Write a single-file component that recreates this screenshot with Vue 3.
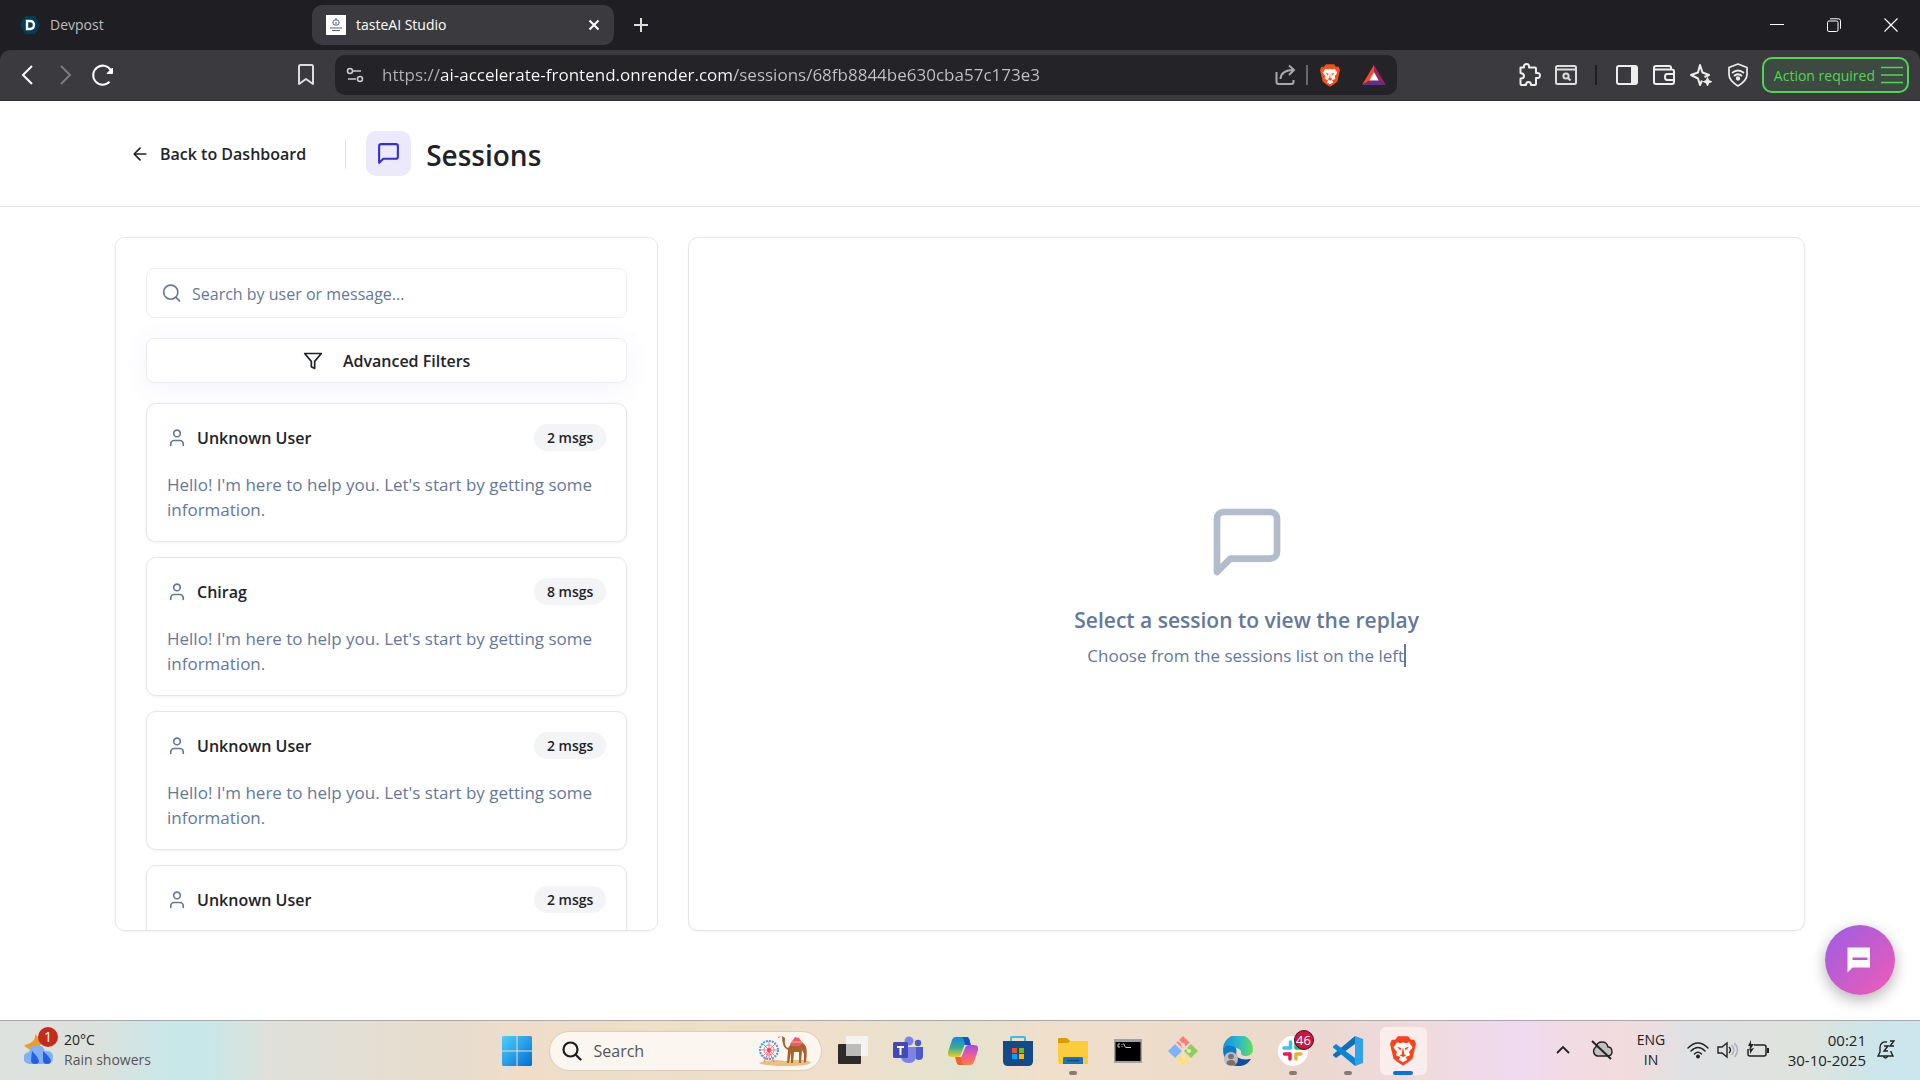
<script setup>
import { ref } from 'vue'

const address = ref('https://ai-accelerate-frontend.onrender.com/sessions/68fb8844be630cba57c173e3')
const query = ref('')
const taskbarQuery = ref('')
const greeting = "Hello! I'm here to help you. Let's start by getting some information."
const sessions = [
  { id: 1, user: 'Unknown User', count: 2, preview: greeting },
  { id: 2, user: 'Chirag', count: 8, preview: greeting },
  { id: 3, user: 'Unknown User', count: 2, preview: greeting },
  { id: 4, user: 'Unknown User', count: 2, preview: greeting }
]
</script>

<template>
  <div class="screen">
    <header class="tabs">
      <div class="tab">
        <svg width="20" height="20" viewBox="0 0 20 20"><path d="M5 1h10l5 9-5 9H5L0 10z" fill="#003e54" /><path d="M7 6h3c2.700 0 4 1.500 4 4s-1.300 4-4 4H7z" fill="none" stroke="#fff" stroke-width="2.400" /></svg>
        <span class="tab-title">Devpost</span>
      </div>
      <div class="tab active">
        <svg width="20" height="20" viewBox="0 0 20 20"><path d="M0 0h20v20H0z" fill="#fff" /><g fill="none" stroke="#53607e"><rect x="7" y="5" width="6" height="5" rx="2" /><path d="M10 3v2M9 8h2M4 13h12M6 15.500h8" /></g></svg>
        <span class="tab-title">tasteAI Studio</span>
        <button class="bare close" aria-label="Close tab"><svg width="12" height="12" viewBox="0 0 12 12"><path d="M1.500 1.500l9 9M10.500 1.500l-9 9" stroke="#fff" stroke-width="2" /></svg></button>
      </div>
      <button class="bare new-tab" aria-label="New tab"><svg width="14" height="14" viewBox="0 0 14 14"><path d="M7 0v14M0 7h14" stroke="#ddd" stroke-width="2" /></svg></button>
      <div class="window-buttons">
        <button class="bare" aria-label="Minimize"><svg width="14" height="14" viewBox="0 0 14 14"><path d="M0 6.500h14" stroke="#fff" /></svg></button>
        <button class="bare" aria-label="Restore"><svg width="14" height="14" viewBox="0 0 14 14" fill="none" stroke="#fff"><rect x=".5" y="3" width="10.500" height="10.500" rx="1.500" /><path d="M3 .8h8.500a2 2 0 0 1 2 2v8" /></svg></button>
        <button class="bare" aria-label="Close window"><svg width="14" height="14" viewBox="0 0 14 14"><path d="M.5.5l13 13M13.500.5l-13 13" stroke="#fff" stroke-width="1.200" /></svg></button>
      </div>
    </header>

    <nav class="toolbar" aria-label="Browser toolbar">
      <div class="history">
        <button class="bare" aria-label="Back"><svg width="24" height="24" viewBox="0 0 24 24" fill="none" stroke="#fff" stroke-width="2"><path d="M17 3l-9 9 9 9" /></svg></button>
        <button class="bare" aria-label="Forward"><svg width="24" height="24" viewBox="0 0 24 24" fill="none" stroke="#7d7c81" stroke-width="2"><path d="M8 3l9 9-9 9" /></svg></button>
        <button class="bare" aria-label="Reload"><svg width="24" height="24" viewBox="0 0 24 24" fill="none" stroke="#fff" stroke-width="2"><path d="M18.500 18.800A9.500 9.500 0 1 1 20 7.500" /><path d="M21.500 5v5.500H16z" fill="#fff" stroke-width="1" /></svg></button>
      </div>
      <button class="bare bookmark" aria-label="Bookmark this tab"><svg width="18" height="22" viewBox="0 0 18 22" fill="none" stroke="#ddd" stroke-width="2"><path d="M2 2.500Q2 1 3.500 1h11Q16 1 16 2.500V20l-7-5-7 5z" stroke-linejoin="round" /></svg></button>
      <div class="address">
        <button class="bare" aria-label="Site information"><svg width="18" height="16" viewBox="0 0 18 16" fill="none" stroke="#ccc" stroke-width="1.600"><circle cx="4" cy="4" r="2.500" /><path d="M7 4h8M2 12h8" /><circle cx="14" cy="12" r="2.500" /></svg></button>
        <input v-model="address" class="url" type="text" aria-label="Address" />
        <button class="bare" aria-label="Share"><svg width="22" height="22" viewBox="0 0 22 22" fill="none" stroke="#aaa9ae" stroke-width="2"><path d="M1.500 8v10a2 2 0 0 0 2 2h13a2 2 0 0 0 2-2v-2" /><path d="M5.500 15c.5-6 5-9 13-9M14 1.500l5 4.500-5 5" /></svg></button>
        <i class="rule light"></i>
        <button class="bare brave" aria-label="Brave Shields"><svg width="20" height="23" viewBox="0 0 30 34"><path d="M9 0h12l3 4 4 0 2 5-1 4-3 13-5 4-6 4-6-4-5-4-3-13-1-4 2-5h4z" fill="#fb4d14" /><path d="M8 7l4 1 3-1 3 1 4-1 4 6-4 5 1 4-5 2 2 3-5 3-5-3 2-3-5-2 1-4-4-5z" fill="#fff" /><path d="M8 13l5 1.500-1 3zM22 13l-5 1.500 1 3zM15 14l-1 7-3 1 4 3 4-3-3-1z" fill="#fb4d14" /></svg></button>
        <button class="bare bat" aria-label="Brave Rewards"><svg width="24" height="20" viewBox="0 0 24 20"><path d="M12 0L0 20l7.500-4.500L12 7z" fill="#ff4724" /><path d="M12 0l12 20-7.500-4.500L12 7z" fill="#9e1f63" /><path d="M0 20h24l-7.500-4.500h-9z" fill="#662d91" /><path d="M12 7l4.800 8.500H7.200z" fill="#fff" /></svg></button>
      </div>
      <div class="extensions">
        <button class="bare" aria-label="Extensions"><svg width="24" height="24" viewBox="0 0 24 24" fill="none" stroke="#eee" stroke-width="2" stroke-linejoin="round"><path d="M3.500 4.500H7q-.5-3.500 2.500-3.500T12 4.500h6q1 0 1 1V10q4-.5 4 2.500T19 15v6q0 1-1 1h-4q0-3-2.500-3T9 22H4.500q-1 0-1-1v-5.500q3.500 0 3.500-2.500T3.500 10z" /></svg></button>
        <button class="bare" aria-label="Search tabs"><svg width="24" height="24" viewBox="0 0 24 24" fill="none" stroke="#ddd" stroke-width="2"><rect x="2" y="3" width="20" height="18" rx="1.500" /><path d="M2 6.500h20" /><circle cx="12" cy="13" r="2.600" /><path d="M14 15l2.500 2.500" /></svg></button>
        <i class="rule dark"></i>
        <button class="bare" aria-label="Sidebar"><svg width="24" height="24" viewBox="0 0 24 24" fill="none" stroke="#eee" stroke-width="2"><rect x="2" y="3" width="20" height="18" rx="2" /><path d="M16 3h6v18h-6z" fill="#eee" stroke="none" /></svg></button>
        <button class="bare" aria-label="Wallet"><svg width="24" height="24" viewBox="0 0 24 24" fill="none" stroke="#eee" stroke-width="2"><path d="M19 6V4.500Q19 3 17 3H4Q2 3 2 5v14q0 2 2 2h16q2 0 2-2V8.500Q22 6.500 20 6.500H3M22 11h-7q-2 0-2 3t2 3h7z" /></svg></button>
        <button class="bare" aria-label="Leo AI"><svg width="24" height="24" viewBox="0 0 24 24" fill="none" stroke="#eee" stroke-width="2" stroke-linejoin="round"><path d="M13 17.500L11 22l-2-6.500L2 12l7-2.500 2-7.500 2.500 7.500L20 12l-4.500 2" /><path d="M18.500 14.500l1.200 3 3 1.200-3 1.200-1.200 3-1.200-3-3-1.200 3-1.200z" fill="#eee" stroke-width="1" /></svg></button>
        <button class="bare" aria-label="Brave VPN"><svg width="24" height="24" viewBox="0 0 24 24" fill="none" stroke="#eee" stroke-width="1.700"><path d="M12 1l9 3.500v7q0 6-9 11.500Q3 17.500 3 11.500v-7z" stroke-linejoin="round" /><path d="M6 10q6-5 12 0M8 13q4-3.500 8 0" /><circle cx="12" cy="15.500" r="1.300" fill="#eee" /></svg></button>
      </div>
      <button class="menu">Action required<svg width="22" height="18" viewBox="0 0 22 18"><path d="M0 1.500h22M0 9h22M0 16.500h22" stroke="#50d650" stroke-width="1.600" /></svg></button>
    </nav>

    <main class="page">
      <header class="page-header">
        <div class="container header-row">
          <button class="bare back"><svg width="20" height="20" viewBox="0 0 24 24" fill="none" stroke="currentColor" stroke-width="2" stroke-linecap="round" stroke-linejoin="round"><path d="M12 19l-7-7 7-7M19 12H5" /></svg>Back to Dashboard</button>
          <i class="divider"></i>
          <span class="badge-icon"><svg width="25" height="25" viewBox="0 0 24 24" fill="none" stroke="#342ce0" stroke-width="2" stroke-linecap="round" stroke-linejoin="round"><path d="M21 15a2 2 0 0 1-2 2H7l-4 4V5a2 2 0 0 1 2-2h14a2 2 0 0 1 2 2z" /></svg></span>
          <h1>Sessions</h1>
        </div>
      </header>

      <div class="container panels">
        <section class="panel list" aria-label="Sessions">
          <label class="search">
            <svg width="20" height="20" viewBox="0 0 24 24" fill="none" stroke="currentColor" stroke-width="2" stroke-linecap="round"><circle cx="10.500" cy="11" r="8.500" /><path d="M21 21.500l-4.300-4.300" /></svg>
            <input v-model="query" type="text" placeholder="Search by user or message..." aria-label="Search by user or message" />
          </label>
          <button class="filters"><svg width="20" height="20" viewBox="0 0 24 24" fill="none" stroke="currentColor" stroke-width="2" stroke-linejoin="round"><path d="M22 3H2l8 9.460V19l4 2v-8.540z" /></svg>Advanced Filters</button>
          <article v-for="s in sessions" :key="s.id" class="card">
            <div class="card-head">
              <svg width="20" height="20" viewBox="0 0 24 24" fill="none" stroke="currentColor" stroke-width="2" stroke-linecap="round"><circle cx="12" cy="6.500" r="4" /><path d="M19.500 21v-2a4 4 0 0 0-4-4h-7a4 4 0 0 0-4 4v2" /></svg>
              <h2>{{ s.user }}</h2>
              <span class="count">{{ s.count }} msgs</span>
            </div>
            <p>{{ s.preview }}</p>
          </article>
        </section>

        <section class="panel replay" aria-label="Replay">
          <svg width="80" height="80" viewBox="0 0 24 24" fill="none" stroke="#b1bccc" stroke-width="2" stroke-linecap="round" stroke-linejoin="round"><path d="M21 15a2 2 0 0 1-2 2H7l-4 4V5a2 2 0 0 1 2-2h14a2 2 0 0 1 2 2z" /></svg>
          <h2>Select a session to view the replay</h2>
          <p>Choose from the sessions list on the left<i class="caret"></i></p>
        </section>
      </div>

      <button class="chat" aria-label="Open chat"><svg width="30" height="30" viewBox="0 0 24 24"><path d="M2 2h18v16H6l-4 4z" fill="#fff" /><path d="M6 11h12" stroke="#c653c8" stroke-width="2" /></svg></button>
    </main>

    <footer class="taskbar">
      <div class="weather">
        <span class="weather-icon">
          <svg width="30" height="32" viewBox="0 0 30 32"><path d="M11 0q1 9-11 11 4 6 12 5l7-8z" fill="#f19b25" /><path d="M6 30a6 6 0 0 1-1-12q1-7 8-7 6 0 8 6 8-1 8 6t-6 7z" fill="#83b0f2" /><path d="M8 17q6 6 7 10 0 3-4 3t-4-4zM19 17q7 6 8 10 0 3-4 3t-4-4z" fill="#2261e6" /></svg>
          <b class="alert">1</b>
        </span>
        <div><div>20°C</div><div class="soft">Rain showers</div></div>
      </div>

      <div class="apps">
        <button class="app" aria-label="Start"><svg width="30" height="30" viewBox="0 0 30 30"><defs><linearGradient id="win" x2="1" y2="1"><stop stop-color="#4cd0ff" /><stop offset="1" stop-color="#006fd0" /></linearGradient></defs><path d="M1 0h13.500v14.500H0V1zM15.500 0H29l1 1v13.500H15.500zM0 15.500h14.500V30H1l-1-1zM15.500 15.500H30V29l-1 1H15.500z" fill="url(#win)" /></svg></button>
        <label class="pill">
          <svg width="20" height="20" viewBox="0 0 20 20" fill="none" stroke="#1d1d1d" stroke-width="2.200" stroke-linecap="round"><circle cx="8.500" cy="8.500" r="7" /><path d="M13.500 13.500l5 5" /></svg>
          <input v-model="taskbarQuery" type="text" placeholder="Search" aria-label="Search" />
          <svg class="camel" width="54" height="32" viewBox="0 0 54 32"><path d="M1 28q12-5 26-2 16-3 26 1 0 4-24 4T1 28z" fill="#eac07e" /><g fill="none" stroke="#5298e0"><circle cx="11" cy="15" r="9" stroke-width="2" stroke-dasharray="2 1" /><circle cx="11" cy="15" r="5" stroke="#e8849a" /><path d="M2 15h18M11 6v18M4.500 8.500l13 13M17.500 8.500l-13 13" stroke="#e8849a" /><path d="M11 16L6 27M11 16l5 11" stroke="#f06a70" /></g><circle cx="11" cy="15" r="2" fill="#ee4066" /><path d="M20 3l4-2 3 2q-1 9 3 10l4-5 4-4 4 1 5 5q3 4 1 17l-2 1 0-9-2-4-1 13h-2v-11h-5l-1 11h-2v-11l-2 11h-2l1-13q-6-2-6-14l-4 1z" fill="#a9612b" /><path d="M32 9l5-7 4 1 4 6-4 2h-7z" fill="#e65a78" /><path d="M33 7h11" stroke="#f8c04c" /></svg>
        </label>
        <button class="app" aria-label="Task view"><svg width="30" height="30" viewBox="0 0 30 30"><rect y="8" width="23" height="20" rx="1" fill="#2c2b2a" /><rect x="8" y="0" width="22" height="20" rx="1" fill="#f4f4f4" /><path d="M8 8h15v12H8z" fill="#bdbbb9" /></svg></button>
        <button class="app" aria-label="Microsoft Teams"><svg width="30" height="30" viewBox="0 0 30 30"><circle cx="16" cy="5" r="4.500" fill="#7b83eb" /><circle cx="25" cy="7" r="3.200" fill="#5059c9" /><path d="M22 11h8v9q0 4-4 4t-4-4z" fill="#5059c9" /><path d="M8 11h15v9q0 7-7 7t-8-6z" fill="#7b83eb" /><rect y="6" width="15" height="16" rx="1.500" fill="#444ab5" /><path d="M4 11h7M7.500 11v8" stroke="#fff" stroke-width="2" /></svg></button>
        <button class="app" aria-label="Copilot"><svg width="30" height="28" viewBox="0 0 30 28"><defs><linearGradient id="cpa" x2="0" y2="1"><stop stop-color="#1784e8" /><stop offset=".5" stop-color="#31a99a" /><stop offset="1" stop-color="#f0cf1f" /></linearGradient><linearGradient id="cpb" x2="0" y2="1"><stop stop-color="#a04ee5" /><stop offset=".5" stop-color="#ec5a9e" /><stop offset="1" stop-color="#ff8140" /></linearGradient></defs><path d="M8 0h11q2 0 3 5l-5 2-4 10q-1 3-4 3H4q-5 0-4-5L4 3q1-3 4-3z" fill="url(#cpa)" /><path d="M14 0h5q2 0 3 5l1 3h-6q-1-7-3-8z" fill="#1750c4" /><path d="M22 28H11q-2 0-3-5l5-2 4-10q1-3 4-3h5q5 0 4 5l-4 12q-1 3-4 3z" fill="url(#cpb)" /><path d="M16 28h-5q-2 0-3-5l-1-3h6q1 7 3 8z" fill="#f2622f" /></svg></button>
        <button class="app" aria-label="Microsoft Store"><svg width="30" height="30" viewBox="0 0 30 30"><path d="M8 6V1.500Q8 1 9 1h12q1 0 1 .5V6" fill="none" stroke="#35bfef" stroke-width="2" /><path d="M0 5h30v20q0 5-5 5H5q-5 0-5-5z" fill="#124b87" /><path d="M9 12h5v5H9z" fill="#f25022" /><path d="M16 12h5v5h-5z" fill="#7fba00" /><path d="M9 18h5v5H9z" fill="#00a4ef" /><path d="M16 18h5v5h-5z" fill="#ffb900" /></svg></button>
        <button class="app running" aria-label="File Explorer"><svg width="30" height="28" viewBox="0 0 30 28"><path d="M0 2q0-1 1-1h8l3 3v5H0z" fill="#dc9b06" /><path d="M0 6h10l3-2h16q1 0 1 1v22H1q-1 0-1-1z" fill="#fdcc3c" /><path d="M5 27v-6q0-1 2-1h16q2 0 2 1v6z" fill="#1473c7" /><path d="M9 23.500h12" stroke="#0a4a8c" stroke-width="1.500" /></svg></button>
        <button class="app" aria-label="Command Prompt"><svg width="28" height="24" viewBox="0 0 28 24"><path d="M0 0h28v24H0z" fill="#9ea2a6" /><path d="M1.500 3h25v19h-25z" fill="#000" /><g fill="none" stroke="#ccc"><path d="M6 5H4v3h2M8 5v1M8 7v1M9.500 4.500l2 4M12 8.500h5" /></g></svg></button>
        <button class="app" aria-label="Git"><svg width="30" height="30" viewBox="0 0 30 30"><path d="M15 0l6.500 6.500L15 13 8.500 6.500z" fill="#ff7d80" /><path d="M7 8l7 7-7 7-7-7z" fill="#80b3ff" /><path d="M23 8l7 7-7 7-7-7z" fill="#8ecf5e" /><path d="M15 16l7 7-7 7-7-7z" fill="#ffe07d" /><path d="M10 4l10 10M15 9v12" stroke="#efe0d0" stroke-width="1.500" /><circle cx="15" cy="9" r="2" fill="#efe0d0" /><circle cx="21" cy="15" r="2" fill="#efe0d0" /><circle cx="15" cy="21" r="2" fill="#efe0d0" /></svg></button>
        <button class="app" aria-label="Microsoft Edge"><svg width="30" height="30" viewBox="0 0 30 30"><defs><linearGradient id="edge"><stop stop-color="#168fd7" /><stop offset=".5" stop-color="#27b7ce" /><stop offset="1" stop-color="#63df55" /></linearGradient></defs><path d="M0 14A15 15 0 0 1 30 13q0 7-7 7-5 0-5-3 1-2-2-4Q9 9 0 14z" fill="url(#edge)" /><path d="M0 15q2-7 9-5 6 1 4 8-1 8 5 12Q2 32 0 15z" fill="#087dc7" /><path d="M13 17q0 8 15 6-5 8-14 7-6-6-1-13z" fill="#104f9e" /><circle cx="8" cy="23" r="7" fill="#c2bdb8" /><circle cx="8" cy="20.500" r="2.800" fill="#77716c" /><path d="M3.500 28q0-4 4.500-4t4.500 4q-4 3-9 0z" fill="#77716c" /></svg></button>
        <button class="app running" aria-label="Slack, 46 unread"><svg width="30" height="30" viewBox="0 0 30 30"><circle cx="15" cy="15" r="15" fill="#fff" /><g stroke-width="3.500" stroke-linecap="round"><path d="M12.500 6v6M6 12h5" stroke="#36c5f0" /><path d="M18 6v6M19 12h4" stroke="#2eb67d" /><path d="M18 18v5M18 18h5" stroke="#ecb22e" /><path d="M12 18v5M6.500 18h5" stroke="#e01e5a" /></g></svg><b class="unread">46</b></button>
        <button class="app running" aria-label="Visual Studio Code"><svg width="30" height="30" viewBox="0 0 30 30"><path d="M22 0l8 3v24l-8 3z" fill="#2fa2ee" /><path d="M22 0v8L3 22l-3-2.500v-1z" fill="#0d70b8" /><path d="M0 11.500v-1L3 8l19 14v8z" fill="#0a86d2" /></svg></button>
        <button class="app current" aria-label="Brave"><svg width="26" height="30" viewBox="0 0 30 34"><path d="M9 0h12l3 4 4 0 2 5-1 4-3 13-5 4-6 4-6-4-5-4-3-13-1-4 2-5h4z" fill="#fb421b" /><path d="M8 7l4 1 3-1 3 1 4-1 4 6-4 5 1 4-5 2 2 3-5 3-5-3 2-3-5-2 1-4-4-5z" fill="#fff" /><path d="M8 12l5 1.500-1 3zM22 12l-5 1.500 1 3zM14.500 14l-1 7-2.500 1 4 2 4-2-2.500-1-1-7z" fill="#fb421b" /></svg></button>
      </div>

      <div class="tray">
        <button class="bare" aria-label="Show hidden icons"><svg width="14" height="10" viewBox="0 0 14 10" fill="none" stroke="#222" stroke-width="1.800"><path d="M1 8l6-6 6 6" /></svg></button>
        <button class="bare cloud" aria-label="OneDrive"><svg width="22" height="20" viewBox="0 0 22 20" fill="none" stroke="#222" stroke-width="1.400"><path d="M6 16a5 5 0 0 1-1-9q1-5 6-5t6 5q4 0 4 5 0 4-5 4z" fill="#c4bfc0" /><path d="M1 1l19 18" stroke-width="2" /></svg></button>
        <div class="lang"><div>ENG</div><div>IN</div></div>
        <button class="bare status" aria-label="Network, sound and battery">
          <svg width="22" height="18" viewBox="0 0 22 18" fill="none" stroke="#222" stroke-width="1.500" stroke-linecap="round"><path d="M1 7q10-10 20 0M4 10q7-7 14 0M7.500 13q3.500-3.500 7 0" /><circle cx="11" cy="15.500" r="1.200" fill="#222" /></svg>
          <svg width="22" height="18" viewBox="0 0 22 18" fill="none" stroke="#222" stroke-width="1.400"><path d="M1 6h4l5-4v14l-5-4H1zM12 6q3 3 0 6" /><path d="M14.500 4q5 5 0 10M17.500 2q6 7 0 14" stroke="#aab" /></svg>
          <svg width="22" height="20" viewBox="0 0 22 20" fill="none" stroke="#222" stroke-width="1.500"><path d="M7 5h10q2 0 2 2v7q0 2-2 2H3q-2 0-2-2V9" /><path d="M20 8h2v5h-2zM4 0L1 6h2L2 11l5-7H4zM3 14V9l4-1z" fill="#222" stroke="none" /></svg>
        </button>
        <div class="clock"><div>00:21</div><div>30-10-2025</div></div>
        <button class="bare bell" aria-label="Notifications"><svg width="18" height="20" viewBox="0 0 18 20" fill="none" stroke="#222" stroke-width="1.400"><path d="M10 2Q4 1 3 7v5l-2 4h15l-2-4v-1M6 16q2.500 4 5 0M7 6h4l-4 5h4M13 1h4l-4 5h4" /></svg></button>
      </div>
    </footer>
  </div>
</template>

<style>
body { margin: 0; background: #fff; }
</style>

<style scoped>
.screen, .screen * { box-sizing: border-box; }
.screen { display: flex; flex-direction: column; height: 100vh; overflow: hidden; background: #1f1e23; font-family: "Open Sans", "Noto Sans", sans-serif; color: #1f2328; }
svg { display: block; flex: none; }
button, input { font: inherit; color: inherit; }
.bare { display: flex; align-items: center; justify-content: center; padding: 0; border: 0; background: none; cursor: pointer; }
h1, h2, p { margin: 0; }

.tabs { display: flex; align-items: center; flex: none; height: 50px; padding-left: 8px; font-size: 14px; }
.tab { display: flex; align-items: center; gap: 10px; width: 304px; height: 40px; padding: 0 12px; color: #bebdc2; }
.tab.active { width: 302px; padding: 0 12px 0 14px; border-radius: 10px; background: #3b3a3f; color: #fff; }
.tab-title { flex: 1; padding-bottom: 2px; }
.close { width: 16px; height: 16px; }
.new-tab { width: 54px; height: 40px; }
.window-buttons { display: flex; margin-left: auto; padding-right: 1px; }
.window-buttons .bare { width: 57px; height: 48px; }

.toolbar { display: flex; align-items: center; flex: none; height: 51px; border-bottom: 1px solid #2b2a2f; background: #3b3a3f; border-radius: 10px 10px 0 0; }
.history { display: flex; gap: 14px; padding-left: 15px; }
.bookmark { margin-left: 182px; margin-right: 20px; }
.address { display: flex; align-items: center; flex: 1; height: 40px; padding: 0 11px; border-radius: 10px; background: #242328; }
.url { flex: 1; min-width: 0; height: 40px; margin-left: 18px; padding: 0 0 2px; border: 0; outline: 0; font-size: 17px; color: transparent; background: linear-gradient(90deg, #b3b2b6 58px, #fff 58px, #fff 350px, #c4c3c7 350px); background-clip: text; }
.rule { width: 2px; height: 20px; background: #1f1e23; }
.rule.light { margin: 0 12px 0 9px; background: #69686d; }
.bat { margin-left: 22px; }
.extensions { display: flex; align-items: center; gap: 13px; margin-left: 120px; margin-right: 12px; }
.rule.dark { margin: 0 5px 0 4px; }
.menu { display: flex; align-items: center; gap: 6px; height: 36px; margin-right: 11px; padding: 0 4px 0 10px; border: 2px solid #50d650; border-radius: 10px; background: #3d4a42; color: #50d650; font-size: 14px; white-space: nowrap; }

.page { position: relative; display: flex; flex-direction: column; flex: 1; min-height: 0; padding-bottom: 89px; background: #fff; }
.container { width: 100%; max-width: 1750px; margin: 0 auto; padding: 0 30px; }
.page-header { flex: none; padding: 30px 0; border-bottom: 1px solid #e5e7eb; }
.header-row { display: flex; align-items: center; height: 45px; }
.back { gap: 10px; margin-left: 15px; font-size: 16px; font-weight: 600; white-space: nowrap; }
.divider { width: 1px; height: 30px; margin: 0 20px 0 39px; background: #e2e4e8; }
.badge-icon { display: flex; align-items: center; justify-content: center; width: 45px; height: 45px; border-radius: 10px; background: #ebe9fa; }
h1 { margin-left: 15px; padding-top: 2px; font-size: 28px; line-height: 40px; font-weight: 600; }

.panels { display: grid; grid-template-columns: repeat(3, minmax(0, 1fr)); gap: 30px; flex: 1; min-height: 0; margin-top: 30px; }
.panel { min-height: 0; border: 1px solid #e5e7eb; border-radius: 10px; background: #fff; box-shadow: 0 1px 2px #0000000d; overflow: hidden; }
.list { padding: 30px 30px 0; overflow-y: auto; scrollbar-width: none; }
.search { display: flex; align-items: center; gap: 10px; height: 50px; padding: 0 15px; border: 1px solid #edeff2; border-radius: 8px; color: #647999; font-size: 16px; }
.search input, .pill input { flex: 1; min-width: 0; padding: 0; border: 0; outline: 0; background: none; }
.search input { padding-top: 2px; }
input::placeholder { color: inherit; opacity: 1; }
.filters { display: flex; align-items: center; justify-content: center; gap: 20px; width: 100%; height: 45px; margin: 20px 0; padding: 0; border: 1px solid #ebedf1; border-radius: 8px; background: #fff; font-size: 16px; font-weight: 600; box-shadow: 0 5px 30px #4f46e512; }
.card { position: relative; margin-bottom: 15px; padding: 20px 20px 19px; border: 1px solid #e5e7eb; border-radius: 10px; background: #fff; box-shadow: 0 1px 3px #0000000f; }
.card-head { display: flex; align-items: center; gap: 10px; height: 27px; color: #647999; }
.card h2 { flex: 1; color: #1f2328; font-size: 16px; font-weight: 600; }
.count { padding: 0 13px; border-radius: 14px; background: #f3f4f6; color: #1f2328; font-size: 14px; line-height: 27px; font-weight: 600; }
.card p { margin-top: 21px; color: #647999; font-size: 17px; line-height: 25px; }

.replay { grid-column: span 2; display: flex; flex-direction: column; align-items: center; justify-content: center; padding-top: 2px; color: #647999; }
.replay h2 { margin-top: 21px; font-size: 21px; line-height: 35px; font-weight: 600; }
.replay p { display: flex; align-items: center; margin-top: 5px; font-size: 17px; line-height: 25px; }
.caret { width: 2px; height: 23px; background: #647999; }
.chat { position: absolute; right: 25px; bottom: 25px; display: flex; align-items: center; justify-content: center; width: 70px; height: 70px; padding: 0; border: 0; border-radius: 50%; background: linear-gradient(135deg, #9b5de5, #f15bb5); box-shadow: 0 5px 15px #0000004d; }

.taskbar { display: grid; grid-template-columns: 1fr auto 1fr; align-items: center; flex: none; height: 60px; border-top: 1px solid #aaa8a6; font-size: 14px; line-height: 20px; background: linear-gradient(90deg, #dee2de 0, #dce1dc 5%, #c8e7e9 9%, #c9e7e9 11%, #dfe1da 14%, #e5ddd0 21%, #e7dccd 24%, #efddc9 27%, #ecdfc8 36%, #f0dfca 43%, #e4e3cf 50%, #efdfcb 54%, #ecdbca 64%, #ebd8d2 69%, #f0dadd 74%, #efdaf0 79%, #f2dbe3 82%, #f1dcdd 85%, #dfe1e4 88%, #dfe3dd 94%, #cbe6eb 98%, #cde5ee 100%); }
.weather { display: flex; align-items: center; gap: 10px; padding: 0 0 2px 24px; color: #222; }
.weather-icon { position: relative; }
.alert { position: absolute; left: 14px; top: -7px; width: 20px; height: 20px; border-radius: 50%; background: #c42b1c; color: #fff; font-weight: 400; text-align: center; }
.soft { color: #555; }
.apps { display: flex; align-items: center; }
.app { position: relative; display: flex; align-items: center; justify-content: center; width: 47px; height: 48px; margin: 0 4px; padding: 0; border: 0; border-radius: 6px; background: none; }
.pill { display: flex; align-items: center; width: 273px; height: 40px; margin: 0 4px; padding: 0 9px 0 12px; border: 1px solid #d9cdbd; border-radius: 20px; background: #fbf6f0; }
.pill input { margin-left: 12px; color: #555; font-size: 16px; }
.running::after, .current::after { content: ""; position: absolute; bottom: 0; width: 8px; height: 4px; border-radius: 2px; background: #857d74; }
.current { background: #f9eeec; }
.current::after { width: 20px; background: #0078d4; }
.unread { position: absolute; left: 24px; top: 3px; width: 20px; height: 20px; border: 1px solid #412; border-radius: 50%; background: #cc1546; color: #fff; font-size: 13px; line-height: 18px; font-weight: 400; text-align: center; }
.tray { display: flex; align-items: center; justify-content: flex-end; padding: 0 25px 2px 0; color: #222; }
.cloud { margin-left: 21px; }
.lang { width: 40px; margin-left: 18px; text-align: center; }
.status { gap: 8px; margin-left: 16px; }
.clock { width: 93px; margin-left: 4px; font-size: 15px; text-align: right; }
.bell { margin-left: 11px; }
</style>
